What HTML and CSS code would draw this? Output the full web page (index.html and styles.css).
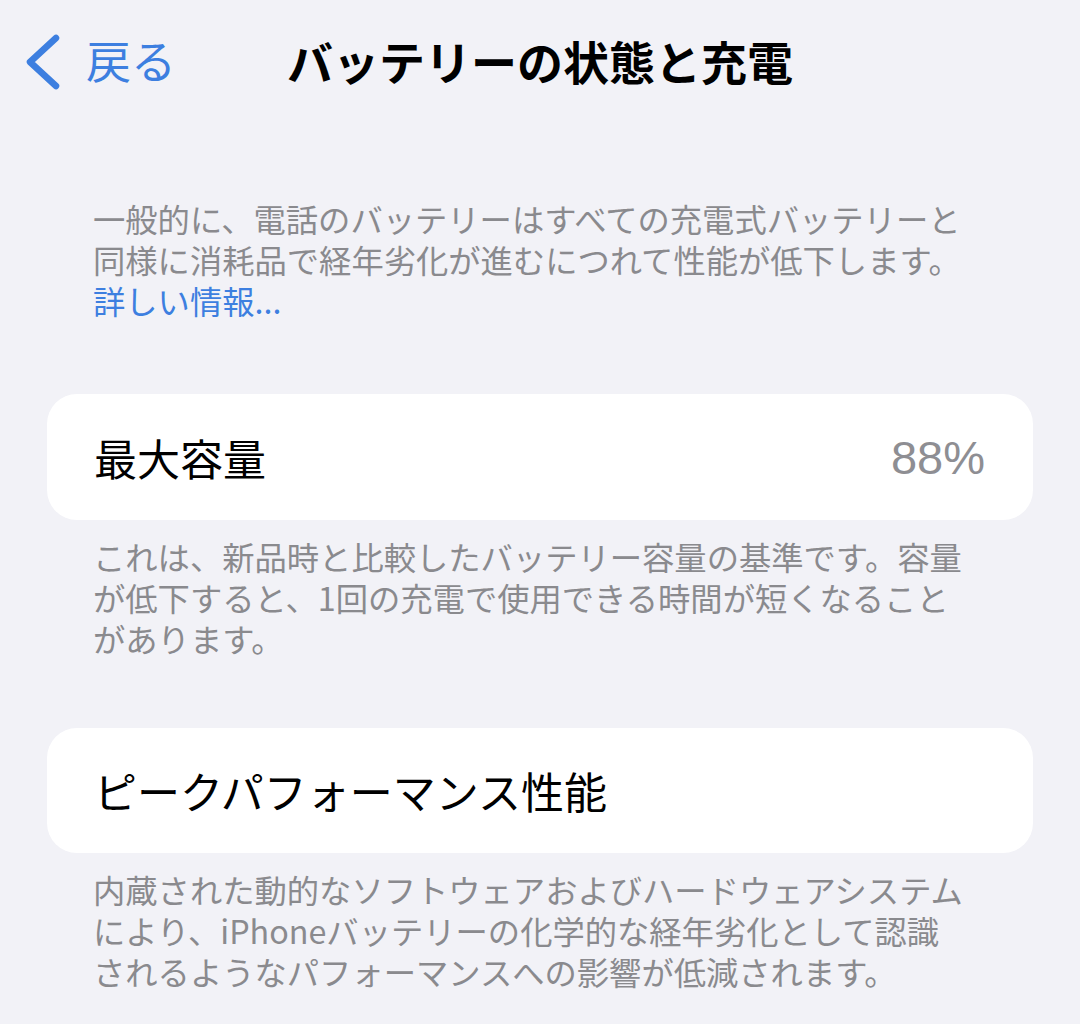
FILE: index.html
```html
<!DOCTYPE html>
<html lang="ja">
<head>
<meta charset="utf-8">
<title>バッテリーの状態と充電</title>
<link rel="stylesheet" href="styles.css">
</head>
<body>
<header class="nav">
  <a class="back" href="#">
    <svg class="chev" width="38" height="58" viewBox="0 0 38 58" aria-hidden="true">
      <polyline points="32,5 6,29 32,53" fill="none" stroke="#3d7fe0" stroke-width="6.5" stroke-linecap="round" stroke-linejoin="round"/>
    </svg>
    <span class="back-label">戻る</span>
  </a>
  <h1 class="title">バッテリーの状態と充電</h1>
  <div class="spacer"></div>
</header>
<main class="content">
  <p class="note intro">一般的に、電話のバッテリーはすべての充電式バッテリーと<br>同様に消耗品で経年劣化が進むにつれて性能が低下します。<br><a class="link" href="#">詳しい情報...</a></p>

  <section class="card card-first">
    <span class="label">最大容量</span>
    <span class="value">88%</span>
  </section>
  <p class="note foot">これは、新品時と比較したバッテリー容量の基準です。容量<br>が低下すると、1回の充電で使用できる時間が短くなること<br>があります。</p>

  <section class="card card-second">
    <span class="label">ピークパフォーマンス性能</span>
  </section>
  <p class="note foot">内蔵された動的なソフトウェアおよびハードウェアシステム<br>により、iPhoneバッテリーの化学的な経年劣化として認識<br>されるようなパフォーマンスへの影響が低減されます。</p>
</main>
</body>
</html>
```

FILE: styles.css
```css
* { box-sizing: border-box; }

html, body {
  margin: 0;
  padding: 0;
  background: #f2f2f7;
  font-family: "Noto Sans CJK JP", "Noto Sans", sans-serif;
  color: #000;
}

.nav {
  height: 124px;
  display: grid;
  grid-template-columns: 1fr auto 1fr;
  align-items: center;
}

.back {
  display: flex;
  align-items: center;
  gap: 24px;
  padding-left: 24px;
  text-decoration: none;
  color: #3d7fe0;
}

.chev { display: block; flex: none; }

.back-label {
  font-size: 45px;
  line-height: 1;
  font-weight: 400;
  margin-top: -6px;
}

.title {
  margin: 0;
  font-size: 46px;
  font-weight: 700;
  line-height: 1;
  letter-spacing: 0;
  margin-top: -4px;
}

.content {
  padding: 0 47px;
}

.note {
  margin: 0;
  padding-left: 46px;
  font-size: 32.3px;
  line-height: 41px;
  color: #8a8a8e;
}

.intro { margin-top: 74px; }

.link {
  color: #3d7fe0;
  text-decoration: none;
}

.card {
  background: #fff;
  border-radius: 30px;
  display: flex;
  align-items: center;
  justify-content: space-between;
  padding: 0 48px 0 47px;
}

.card-first { margin-top: 73px; height: 126px; }
.card-second { margin-top: 69px; height: 125px; }

.foot { margin-top: 16px; }

.label {
  font-size: 43px;
  line-height: 1;
}

.value {
  font-family: "Liberation Sans", Arial, sans-serif;
  font-size: 47px;
  line-height: 1;
  color: #8e8e93;
}
```
